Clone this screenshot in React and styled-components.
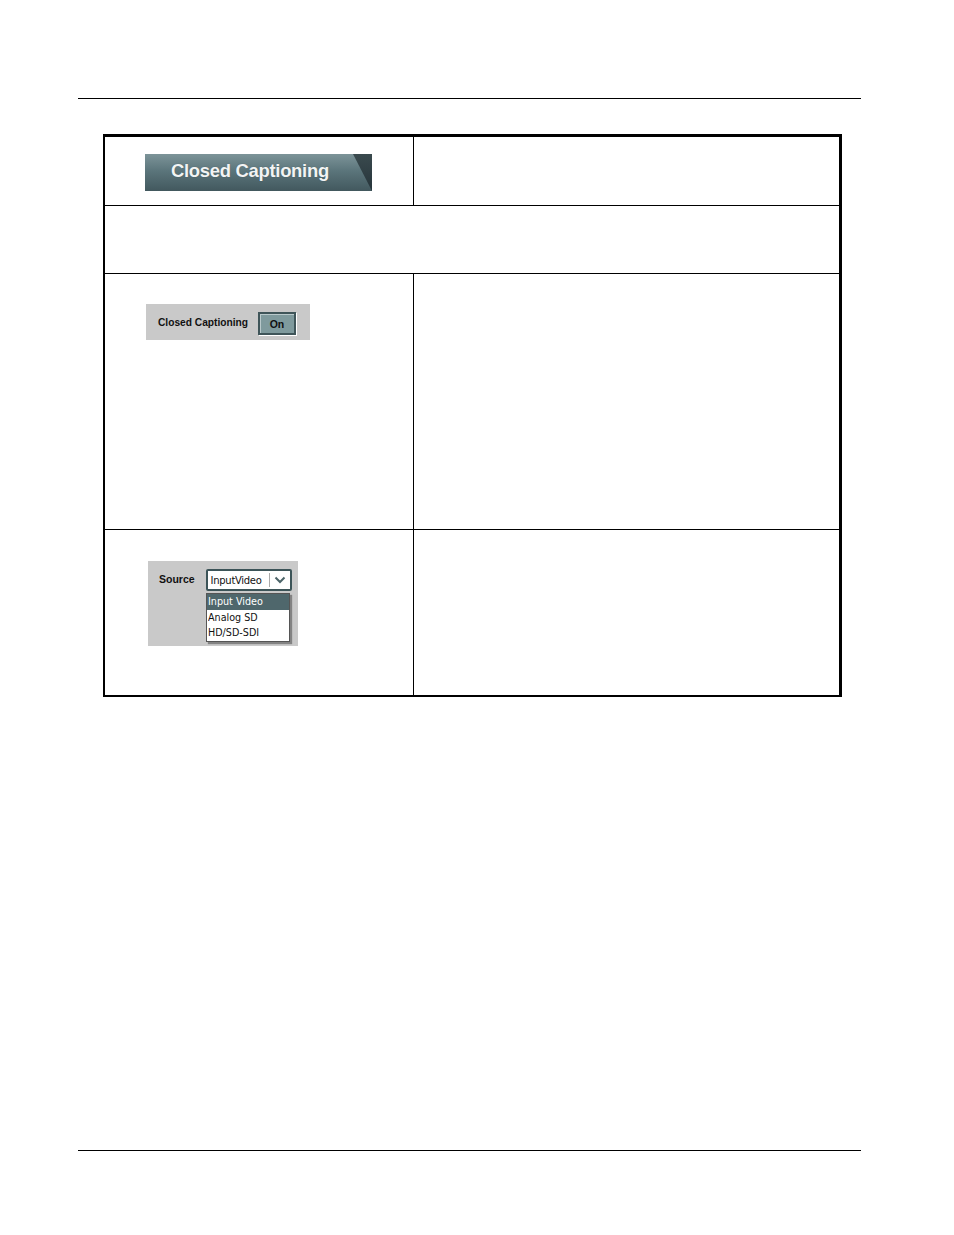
import React from "react";
import styled, { createGlobalStyle } from "styled-components";

const Global = createGlobalStyle`
  html, body { margin: 0; padding: 0; background: #fff; }
  body { font-family: "Liberation Sans", Arial, sans-serif; }
`;

const Page = styled.div`
  width: 954px;
  height: 1235px;
  display: flex;
  flex-direction: column;
  box-sizing: border-box;
  padding-top: 98px;
`;

const Rule = styled.div`
  margin-left: 78px;
  margin-top: ${(p) => p.$top || 0}px;
  width: 783px;
  height: 1px;
  background: #000;
`;

const Table = styled.div`
  margin-top: 35px;
  margin-left: 103px;
  width: 739px;
  box-sizing: border-box;
  border-top: 3px solid #000;
  border-left: 2px solid #000;
  border-right: 3px solid #000;
  border-bottom: 2px solid #000;
  display: flex;
  flex-direction: column;
`;

const Row = styled.div`
  display: flex;
  height: ${(p) => p.$h}px;
  border-bottom: ${(p) => (p.$last ? "none" : "1px solid #000")};
`;

const LeftCell = styled.div`
  flex: 0 0 309px;
  box-sizing: border-box;
  border-right: 1px solid #000;
  padding: ${(p) => p.$pad};
`;

const RightCell = styled.div`
  flex: 1;
`;

const Banner = styled.div`
  position: relative;
  width: 227px;
  height: 37px;
  background: linear-gradient(#3a4a4e, #26343a);
  overflow: hidden;
`;

const BannerTab = styled.div`
  position: absolute;
  inset: 0;
  background: linear-gradient(180deg, #7d9499 0%, #5b757b 45%, #42585e 100%);
  clip-path: polygon(0 0, 208px 0, 227px 37px, 0 37px);
  display: flex;
  align-items: center;
  padding-left: 26px;
  padding-bottom: 3px;
  box-sizing: border-box;
`;

const BannerText = styled.span`
  color: #f2f4f4;
  font-family: "Liberation Sans", Arial, sans-serif;
  font-weight: bold;
  font-size: 19px;
  letter-spacing: -0.3px;
  display: inline-block;
  transform: scaleX(0.97);
  transform-origin: left center;
  text-shadow: 0 0 1px rgba(0, 0, 0, 0.3);
  white-space: nowrap;
`;

const Panel = styled.div`
  background: #c9c9c9;
  width: ${(p) => p.$w}px;
  height: ${(p) => p.$h}px;
  box-sizing: border-box;
  display: flex;
  padding: ${(p) => p.$pad};
  gap: ${(p) => p.$gap}px;
  align-items: flex-start;
`;

const Label = styled.span`
  font-family: "Liberation Sans", Arial, sans-serif;
  font-weight: bold;
  font-size: ${(p) => p.$fs || 10.5}px;
  color: #111;
  margin-top: ${(p) => p.$mt}px;
  white-space: nowrap;
`;

const OnButton = styled.div`
  width: 38px;
  height: 23px;
  box-sizing: border-box;
  border: 2px solid #3f5559;
  box-shadow: inset 1px 1px 0 #b9c9cb, 1px 1px 0 #fff;
  background: #7f9a9d;
  display: flex;
  align-items: center;
  justify-content: center;
  font-family: "Liberation Sans", Arial, sans-serif;
  font-weight: bold;
  font-size: 10.5px;
  color: #101010;
`;

const SelectWrap = styled.div`
  display: flex;
  flex-direction: column;
`;

const Select = styled.div`
  width: 86px;
  height: 22px;
  box-sizing: border-box;
  border: 2px solid #3c5458;
  border-radius: 2px;
  background: #fff;
  display: flex;
  align-items: center;
  font-family: "DejaVu Sans", "Liberation Sans", sans-serif;
  font-size: 10px;
  color: #111;
`;

const SelectText = styled.span`
  flex: 1;
  padding-left: 3px;
  white-space: nowrap;
  letter-spacing: -0.3px;
`;

const Chevron = styled.div`
  width: 20px;
  height: 14px;
  border-left: 1px solid #aaa;
  display: flex;
  align-items: center;
  justify-content: center;
`;

const List = styled.div`
  margin-top: 2px;
  width: 84px;
  box-sizing: border-box;
  border: 1px solid #555;
  background: #fff;
  box-shadow: 2px 2px 1px rgba(0, 0, 0, 0.35);
  display: flex;
  flex-direction: column;
`;

const Item = styled.div`
  height: 15.5px;
  display: flex;
  align-items: center;
  padding-left: 1px;
  font-family: "DejaVu Sans", "Liberation Sans", sans-serif;
  font-size: 10px;
  color: ${(p) => (p.$sel ? "#fff" : "#111")};
  background: ${(p) => (p.$sel ? "#4f676c" : "#fff")};
  white-space: nowrap;
  & > span {
    display: inline-block;
    transform: scaleX(0.96);
    transform-origin: left center;
  }
`;

export default function App() {
  return (
    <Page>
      <Global />
      <Rule />
      <Table>
        <Row $h={68}>
          <LeftCell $pad="17px 0 0 40px">
            <Banner>
              <BannerTab>
                <BannerText>Closed Captioning</BannerText>
              </BannerTab>
            </Banner>
          </LeftCell>
          <RightCell />
        </Row>
        <Row $h={67} />
        <Row $h={255}>
          <LeftCell $pad="30px 0 0 41px">
            <Panel $w={164} $h={36} $pad="8px 0 0 12px" $gap={10}>
              <Label $mt={5} $fs={10.2}>Closed Captioning</Label>
              <OnButton>On</OnButton>
            </Panel>
          </LeftCell>
          <RightCell />
        </Row>
        <Row $h={165} $last>
          <LeftCell $pad="31px 0 0 43px">
            <Panel $w={150} $h={85} $pad="8px 0 0 11px" $gap={11}>
              <Label $mt={4}>Source</Label>
              <SelectWrap>
                <Select>
                  <SelectText>InputVideo</SelectText>
                  <Chevron>
                    <svg width="12" height="8" viewBox="0 0 12 8">
                      <path d="M1.5 1.5 L6 6 L10.5 1.5" fill="none" stroke="#4b6468" strokeWidth="2" />
                    </svg>
                  </Chevron>
                </Select>
                <List>
                  <Item $sel><span>Input Video</span></Item>
                  <Item><span>Analog SD</span></Item>
                  <Item><span>HD/SD-SDI</span></Item>
                </List>
              </SelectWrap>
            </Panel>
          </LeftCell>
          <RightCell />
        </Row>
      </Table>
      <Rule $top={453} />
    </Page>
  );
}
